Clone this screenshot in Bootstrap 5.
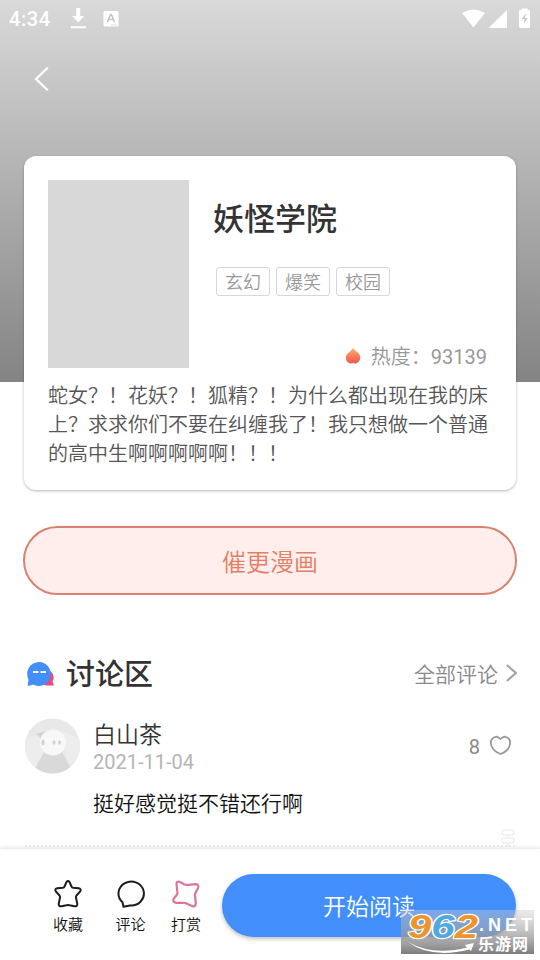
<!DOCTYPE html>
<html lang="zh-CN">
<head>
<meta charset="utf-8">
<meta name="viewport" content="width=device-width, initial-scale=1">
<title>妖怪学院</title>
<link href="https://cdn.jsdelivr.net/npm/bootstrap@5.3.0/dist/css/bootstrap.min.css" rel="stylesheet">
<style>
body{font-family:Roboto,"Noto Sans CJK SC",sans-serif;color:#333;background:#fff}
svg{display:block;flex:none}
.screen{width:540px;height:960px}
.hero{height:382px;background:linear-gradient(#d9d9d9,#848484)}
.statusbar{height:38px;padding:0 9px 0 9px}
.clock{font-size:20px;font-weight:500;line-height:38px;width:61px;letter-spacing:.6px}
.backbar{height:82px;padding:0 0 0 34px}
.comic{margin:-226px 24px 0;padding:24px 24px 0;height:334px;border-radius:12px;box-shadow:0 1px 3px rgba(0,0,0,.28)}
.cover{width:141px;height:188px;background:#d8d8d8}
.comic-name{font-size:31px;font-weight:500;line-height:40px;color:#333;margin:20px 0 0 24px}
.genres{margin:27px 0 0 27px;gap:6px}
.genre{width:54px;height:29px;border:1px solid #d8d8d8;border-radius:3px;font-size:18px;font-weight:350;line-height:29px;color:#999;text-align:center}
.heat{font-size:20px;line-height:22px;color:#999;padding-right:5px}
.heat-label{font-weight:350}
.intro{font-size:20px;font-weight:350;line-height:29px;color:#555;margin:14px -4px 0 0}
.urge,.urge:hover{margin:36px 23px 0;height:69px;border:2px solid #d98270;border-radius:35px;background:#ffeeeb;color:#e27f66;font-size:24px;font-weight:350;line-height:70px;padding:0}
.talk-head{margin:56px 23px 0 26px;height:46px}
.talk-title{font-size:29px;font-weight:500;line-height:46px;margin:2px 0 0 11px}
.all-link{font-size:21px;font-weight:350;color:#888}
.all-link span{padding-top:3px}
.comment{margin:21px 28px 0 25px}
.comment-main{margin-left:13px;padding-top:2px}
.nick{font-size:23px;font-weight:350;line-height:32px}
.date{font-size:20px;line-height:20px;color:#b5b5b5}
.words{font-size:21px;font-weight:350;line-height:30px;color:#111;margin-top:17px}
.likes{font-size:20px;color:#888;height:56px}
.likes span{padding-top:2px}
.divider{margin:0 25px;border-top:2px dotted #eee;height:4px}
.stub{right:25px;top:829px}
.dock{height:111px;box-shadow:0 -1px 4px rgba(0,0,0,.12);padding:25px 24px 0 36px}
.tool{font-size:15px;font-weight:350;line-height:24px;color:#111;width:64px;padding-top:5px}
.tool-b{width:61px}
.tool-c{width:50px}
.read,.read:hover{width:294px;height:63px;border-radius:32px;background:#428ffc;color:#fff;font-size:23px;font-weight:350;line-height:65px;padding:0;box-shadow:0 2px 4px rgba(0,0,0,.25)}
.stamp{left:401px;top:910px;width:133px;height:44px;overflow:visible}
</style>
<script src="https://cdn.jsdelivr.net/npm/bootstrap@5.3.0/dist/js/bootstrap.bundle.min.js"></script>
</head>
<body>
<div class="screen position-relative overflow-hidden d-flex flex-column">
  <header class="hero flex-shrink-0">
    <div class="statusbar d-flex align-items-center text-white">
      <span class="clock">4:34</span>
      <svg width="17" height="22" viewBox="0 0 17 22" fill="#fff"><path d="M6.200 0h4v8h4L8.200 14.500 2.200 8h4zM1 18.200h15v2H1z"/></svg>
      <svg class="ms-3" width="16" height="17" viewBox="0 0 16 17"><rect x=".5" y="0" width="15" height="15.500" rx="1.500" fill="#fff"/><path d="M4.500 11 7.600 3.500h.8l3.100 7.500M5.700 8.500h4.600" fill="none" stroke="#c5c5c5" stroke-width="1.600"/><path d="M8.500 14h5" stroke="#bbb" stroke-dasharray="1 1"/></svg>
      <svg class="ms-auto" width="69" height="24" viewBox="0 0 69 24" fill="#fff"><path d="M0 6Q11.500-1 23 6L11.500 20.500zM45 3v18H26.500zM57 4.500q0-1.500 1.500-1.500h1V1.500h6V3h1q1.500 0 1.500 1.500v15q0 1.500-1.500 1.500h-8Q57 21 57 19.500z"/><path d="m64 6-4 6h2.500L62 17l3.500-6H63z" fill="#c9c9c9"/></svg>
    </div>
    <div class="backbar d-flex align-items-center">
      <svg width="16" height="26" viewBox="0 0 16 26"><path d="M13.800 1.800 2 13l11.800 11.200" fill="none" stroke="#fff" stroke-width="2.200"/></svg>
    </div>
  </header>

  <section class="comic card border-0 position-relative flex-shrink-0">
    <div class="d-flex">
      <div class="cover flex-shrink-0"></div>
      <div class="flex-grow-1 d-flex flex-column">
        <h1 class="comic-name">妖怪学院</h1>
        <div class="genres d-flex">
          <span class="genre">玄幻</span><span class="genre">爆笑</span><span class="genre">校园</span>
        </div>
        <div class="heat mt-auto d-flex justify-content-end align-items-center">
          <svg class="me-2" width="20" height="20" viewBox="0 0 20 20"><defs><linearGradient id="flame" x2="0" y2="1"><stop stop-color="#fbb070"/><stop offset="1" stop-color="#f45149"/></linearGradient></defs><path d="M10 1C12 4 17.300 6 17.300 10.500c0 3.500-2.500 5.500-5.500 6.200l-.8-1.200-1 1.200-1-1.200-.8 1.200C5 16 2.800 14 2.800 10.800 2.800 6.500 7.800 5 10 1z" fill="url(#flame)"/></svg>
          <span><span class="heat-label">热度：</span>93139</span>
        </div>
      </div>
    </div>
    <p class="intro">蛇女？！花妖？！狐精？！为什么都出现在我的床上？求求你们不要在纠缠我了！我只想做一个普通的高中生啊啊啊啊啊！！！</p>
  </section>

  <button class="urge btn flex-shrink-0">催更漫画</button>

  <section class="flex-grow-1">
    <div class="talk-head d-flex align-items-center">
      <svg width="29" height="26" viewBox="0 0 29 26"><path d="M15 9a8.500 8.500 0 0 1 11.500 11.500l1.500 4H20a9 9 0 0 1-7-7z" fill="#e94b78"/><path d="M13 1a12 12 0 1 1-6 22.500q-2.500 1.500-5.500 1l1-6A12 12 0 0 1 13 1z" fill="#428ffc"/><path d="M7 11h5.500M14.500 11H20" stroke="#fff" stroke-width="1.800"/></svg>
      <h2 class="talk-title">讨论区</h2>
      <div class="all-link ms-auto d-flex align-items-center"><span>全部评论</span><svg class="ms-2" width="11" height="20" viewBox="0 0 11 20"><path d="m.8 1 9 8-9 8" fill="none" stroke="#a5a5b2" stroke-width="2.200"/></svg></div>
    </div>
    <article class="comment d-flex align-items-start">
      <svg width="55" height="56" viewBox="0 0 55 56"><defs><clipPath id="round"><circle cx="27.500" cy="28" r="27.500"/></clipPath></defs><g clip-path="url(#round)"><path fill="#e8e8e8" d="M0 0h55v56H0z"/><path d="M0 20 16 16 20 40 5 56 0 56zM37 13l18 8v20L43 46z" fill="#ededed"/><path d="m11 16 11-3-6 7z" fill="#d3d3d3"/><path d="M19 34h18l12 22H7z" fill="#d9d9d9"/><circle cx="28" cy="24.500" r="13" fill="#f8f8f8"/><g fill="#d2d2d2"><ellipse cx="18" cy="24.500" rx="1.500" ry="3"/><ellipse cx="29" cy="24.500" rx="1.400" ry="2.200"/><ellipse cx="34.500" cy="24.500" rx="1.400" ry="2.200"/></g></g></svg>
      <div class="comment-main flex-grow-1">
        <div class="nick">白山茶</div>
        <div class="date">2021-11-04</div>
        <div class="words">挺好感觉挺不错还行啊</div>
      </div>
      <div class="likes d-flex align-items-center"><span>8</span><svg class="ms-2" width="24" height="22" viewBox="0 0 24 22"><path d="M12.500 4Q9.500.8 6.500 2.200C2.500 4 2.500 8 3.500 11c1.300 3.500 5 6.500 9 8 4-1.500 7.700-4.500 9-8 1-3 1-7-3-8.800Q15.500.8 12.500 4z" fill="none" stroke="#999" stroke-width="1.800"/></svg></div>
    </article>
  </section>
  <div class="divider"></div>
  <svg class="stub position-absolute" width="14" height="20" viewBox="0 0 14 20"><path d="M3 1h8q2 0 2 2.500T11 6H3Q1 6 1 3.500T3 1zm0 8h8q2 0 2 2.500T11 14H3q-2 0-2-2.500T3 9zM7 6v3m0 5v4" fill="none" stroke="#f0f0f0" stroke-width="1.300"/></svg>

  <nav class="dock d-flex bg-white position-relative flex-shrink-0">
    <div class="tool d-flex flex-column align-items-center gap-1">
      <svg width="30" height="30" viewBox="0 0 30 30"><path d="M13.600 2.800Q15 1 16.400 2.800L18.500 7.500Q19 8.500 20.200 8.700L25.800 9.300Q28.700 10 27.200 12.300L23.500 16.500Q22.800 17.400 23 18.500L24.300 25Q24.300 27.800 21.500 27.200L16.500 26.200Q15 25.800 13.500 26.200L8.500 27.200Q5.700 27.800 5.700 25L7 18.500Q7.200 17.400 6.500 16.500L2.800 12.300Q1.300 10 4.200 9.300L9.800 8.700Q11 8.500 11.500 7.500z" fill="none" stroke="#1d1d1d" stroke-width="2"/></svg>收藏
    </div>
    <div class="tool tool-b d-flex flex-column align-items-center gap-1">
      <svg width="30" height="30" viewBox="0 0 30 30"><path d="M6.500 23.300A12.700 12 0 1 1 14 26.500L7.500 27.800z" fill="none" stroke="#1d1d1d" stroke-width="2" stroke-linejoin="round"/></svg>评论
    </div>
    <div class="tool tool-c d-flex flex-column align-items-center gap-1">
      <svg width="30" height="30" viewBox="0 0 30 30"><path d="M5.500 5Q5.500 1.800 8.500 2.800L13 5.200Q15 6.200 17.500 5.800L24.500 5.200Q28.500 5.500 27 9L24.500 14Q23.500 16 24.200 18.500L24.800 24.500Q24.300 28.500 21 27L16.500 25Q14 23.500 11.500 23.800L5 23.800Q1 23 2.800 19.500L6 15.500Q7 14 6.200 11.500z" fill="none" stroke="#dc739a" stroke-width="2.200"/></svg>打赏
    </div>
    <button class="read btn ms-auto">开始阅读</button>
  </nav>

  <svg class="stamp position-absolute" viewBox="0 0 133 44">
    <defs><linearGradient id="haze" x2="0" y2="1"><stop stop-color="#ccc" stop-opacity=".4"/><stop offset="1" stop-color="#777" stop-opacity=".95"/></linearGradient></defs>
    <path fill="url(#haze)" d="M0 0h133v44H0z"/>
    <text x="7" y="28" fill="#ee942c" stroke="#fff" stroke-width="2.400" paint-order="stroke" stroke-linejoin="round" font-family="Liberation Sans,Arial,sans-serif" font-weight="700" font-style="italic" font-size="33" textLength="70" lengthAdjust="spacingAndGlyphs">9<tspan fill="#4fa9e2">6</tspan>2</text>
    <path d="M7 32Q32 46 66 37.500L64 35 73 33 70 41 68.500 39.500Q30 49 7 32z" fill="#fff"/>
    <text x="78" y="21" fill="#fff" font-family="Liberation Sans,Arial,sans-serif" font-weight="700" font-size="18" textLength="53">.NET</text>
    <text x="77" y="40" fill="#fff" font-family="Noto Sans CJK SC,sans-serif" font-weight="700" font-size="16" textLength="50">乐游网</text>
  </svg>
</div>
</body>
</html>
